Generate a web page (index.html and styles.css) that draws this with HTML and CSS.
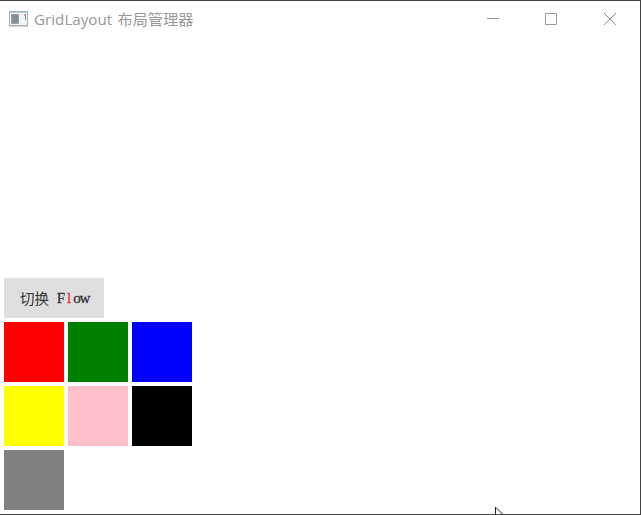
FILE: index.html
```html
<!DOCTYPE html>
<html lang="zh-CN">
<head>
<meta charset="utf-8">
<title>GridLayout 布局管理器</title>
<link rel="stylesheet" href="styles.css">
</head>
<body>
<div class="window">
  <header class="titlebar">
    <svg class="app-icon" width="19" height="16" viewBox="0 0 19 16" shape-rendering="crispEdges">
      <rect width="19" height="16" fill="#a9afb2"/>
      <rect x="1" y="1" width="17" height="1" fill="#b9d0df"/>
      <rect x="1" y="2" width="17" height="12" fill="#f2f5f7"/>
      <rect x="2" y="3" width="8" height="10" fill="#9aa4a9"/>
      <rect x="3" y="4" width="6" height="8" fill="#858d91"/>
      <rect x="16" y="3" width="1" height="6" fill="#8b8b8b"/>
      <rect x="15" y="3" width="1" height="2" fill="#b5b5b5"/>
      <rect y="15" width="19" height="1" fill="#d8d0d0"/>
    </svg>
    <span class="title">GridLayout 布局管理器</span>
    <div class="controls">
      <svg width="58" height="36" viewBox="0 0 58 36"><path d="M16 17.5h12" stroke="#999" fill="none"/></svg>
      <svg width="58" height="36" viewBox="0 0 58 36"><path d="M16.5 12.5h11v11h-11z" stroke="#999" fill="none"/></svg>
      <svg width="53" height="36" viewBox="0 0 53 36"><path d="M17 12l12 12M29 12L17 24" stroke="#888" fill="none"/></svg>
    </div>
  </header>
  <main class="content">
    <button class="switch">切换 <span class="latin"><i>F</i><i class="hot">l</i><i>o</i><i>w</i></span></button>
    <div class="grid">
      <div class="cell red"></div>
      <div class="cell green"></div>
      <div class="cell blue"></div>
      <div class="cell yellow"></div>
      <div class="cell pink"></div>
      <div class="cell black"></div>
      <div class="cell gray"></div>
    </div>
  </main>
  <svg class="cursor" width="10" height="8" viewBox="0 0 10 8"><path d="M1 0L8 7V8H1z" fill="#fff"/><path d="M.5 0V8M1 .5L8 7.5" stroke="#222" fill="none"/></svg>
</div>
</body>
</html>
```
FILE: styles.css
```css
body {
  margin: 0;
}

.window {
  position: relative;
  box-sizing: border-box;
  width: 641px;
  height: 515px;
  display: flex;
  flex-direction: column;
  overflow: hidden;
  background: #fff;
  border: solid #434346;
  border-width: 1px 1px 1px 0;
}

.titlebar {
  display: flex;
  align-items: center;
  height: 36px;
  padding-left: 9px;
}

.app-icon {
  flex: none;
  margin-right: 6px;
}

.title {
  font: 15.2px/20px "Open Sans", "Noto Sans CJK SC", sans-serif;
  word-spacing: 1.3px;
  color: #999;
  white-space: nowrap;
}

.controls {
  display: flex;
  margin-left: auto;
}

.content {
  flex: 1;
  display: flex;
  flex-direction: column;
  justify-content: flex-end;
  gap: 4px;
  padding: 0 4px 4px;
}

.switch {
  display: flex;
  align-items: center;
  width: 100px;
  height: 40px;
  padding: 0 0 0 16px;
  border: 0;
  background: #dfdfdf;
  color: #333;
  font: 14.5px/20px "Noto Sans CJK SC", sans-serif;
  white-space: nowrap;
}

.latin {
  display: grid;
  grid-template-columns: repeat(4, 8px);
  margin-left: 8px;
  font-family: "Liberation Serif", serif;
  font-size: 15px;
  -webkit-text-stroke: 0.3px currentColor;
}

.latin i {
  display: flex;
  justify-content: center;
  font-style: normal;
}

.latin .hot {
  color: #e33;
}

.grid {
  display: grid;
  grid-template-columns: repeat(3, 60px);
  grid-auto-rows: 60px;
  gap: 4px;
}

.red { background: #f00; }
.green { background: #008000; }
.blue { background: #00f; }
.yellow { background: #ff0; }
.pink { background: #ffc0cb; }
.black { background: #000; }
.gray { background: #808080; }

.cursor {
  position: absolute;
  left: 495px;
  bottom: -1px;
}
```
